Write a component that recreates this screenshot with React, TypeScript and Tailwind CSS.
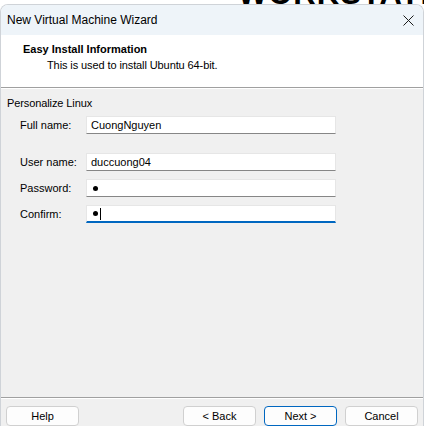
import React from 'react';

const font = { fontFamily: '"Segoe UI", "Liberation Sans", Arial, sans-serif' };

function Field({ label, children, focused, className = '' }: { label: string; children?: React.ReactNode; focused?: boolean; className?: string }) {
  return (
    <div className={`flex items-center pl-[19px] ${className}`}>
      <span className="w-[66px] text-[11px] leading-[14px]">{label}</span>
      <div
        className={`flex h-[18px] w-[250px] items-center bg-white pl-[4px] text-[11px] border-t border-l border-r border-[#e6e6e6] ${
          focused ? 'border-b-2 border-b-[#0067c0]' : 'border-b border-b-[#868686]'
        }`}
      >
        {children}
      </div>
    </div>
  );
}

function Dot() {
  return <span className="inline-block h-[5px] w-[5px] rounded-full bg-black ml-[2px]" />;
}

function Btn({ children, primary }: { children: React.ReactNode; primary?: boolean }) {
  return (
    <button
      className={`h-[20px] w-[73px] rounded-[4px] bg-[#fdfdfd] text-[11px] leading-none text-black ${
        primary ? 'border border-[#0067c0]' : 'border border-[#d0d0d0]'
      }`}
    >
      {children}
    </button>
  );
}

export default function App() {
  return (
    <div className="flex h-[426px] w-[424px] flex-col overflow-hidden bg-white text-black" style={font}>
      <div className="flex h-[4px] shrink-0 items-end overflow-hidden pl-[238px]">
        <span className="mb-[-5px] shrink-0 whitespace-nowrap text-[31px] font-bold leading-none tracking-[1px]">WORKSTATION</span>
      </div>
      <div className="flex flex-1 flex-col overflow-hidden rounded-t-[8px] border-l border-r border-t border-[#cfd3d8]">
        <div className="flex h-[30px] shrink-0 items-center justify-between bg-[#eef4f9] pl-[6px] pr-[9px]">
          <span className="text-[12px] leading-none">New Virtual Machine Wizard</span>
          <svg width="11" height="11" viewBox="0 0 11 11" className="mt-[1px]">
            <path d="M0.5 0.5 L10.5 10.5 M10.5 0.5 L0.5 10.5" stroke="#1a1a1a" strokeWidth="1" />
          </svg>
        </div>
        <div className="flex h-[52px] shrink-0 flex-col bg-white pt-[7px]">
          <span className="pl-[22px] text-[11px] font-bold leading-[14px]">Easy Install Information</span>
          <span className="mt-[2px] pl-[46px] text-[11px] leading-[14px] tracking-[-0.1px]">This is used to install Ubuntu 64-bit.</span>
        </div>
        <div className="h-px shrink-0 bg-[#a0a0a0]" />
        <div className="h-px shrink-0 bg-white" />
        <div className="flex flex-1 flex-col bg-[#f0f0f0]">
          <span className="mt-[7px] pl-[6px] text-[11px] leading-[14px] tracking-[-0.1px]">Personalize Linux</span>
          <Field label="Full name:" className="mt-[6px]">CuongNguyen</Field>
          <Field label="User name:" className="mt-[19px]">duccuong04</Field>
          <Field label="Password:" className="mt-[8px]">
            <Dot />
          </Field>
          <Field label="Confirm:" focused className="mt-[8px]">
            <Dot />
            <span className="ml-[2px] h-[12px] w-px bg-black" />
          </Field>
          <div className="flex-1" />
          <div className="h-px bg-[#a0a0a0]" />
          <div className="h-px bg-white" />
          <div className="flex h-[27px] items-end justify-between pl-[5px] pr-[5px]">
            <Btn>Help</Btn>
            <div className="flex gap-[8px]">
              <Btn>&lt; Back</Btn>
              <Btn primary>Next &gt;</Btn>
              <Btn>Cancel</Btn>
            </div>
          </div>
        </div>
      </div>
    </div>
  );
}
